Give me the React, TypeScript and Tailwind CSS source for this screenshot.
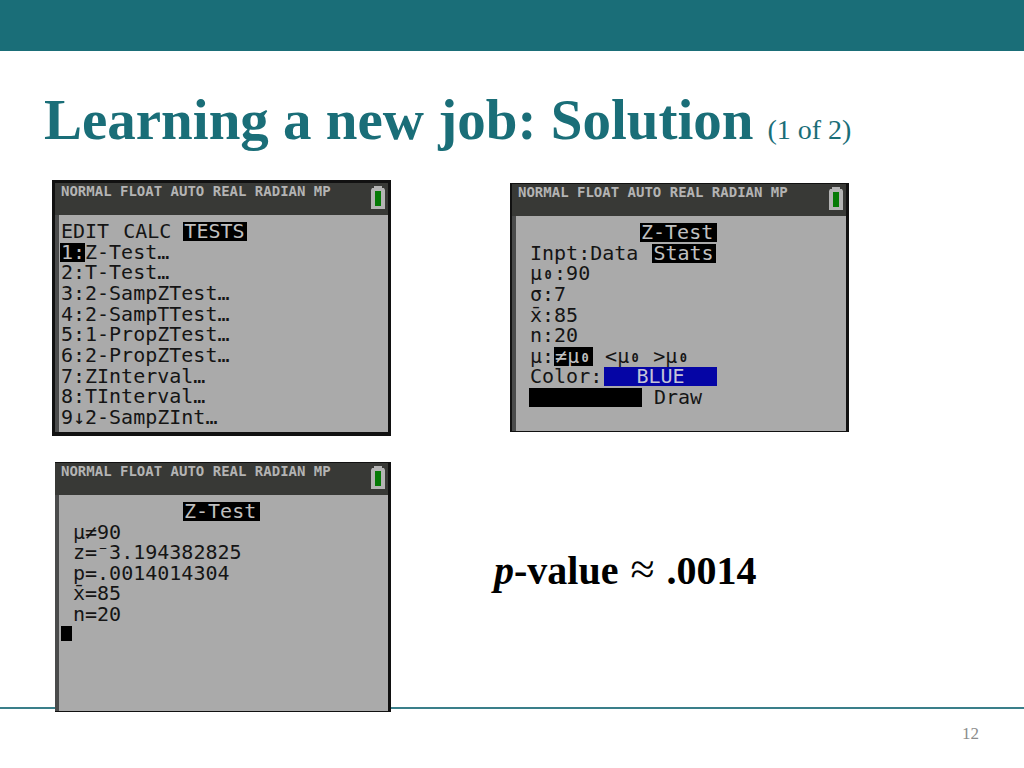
import type { ReactNode } from "react";
import clsx from "clsx";

const TESTS = [
  "T-Test…",
  "2-SampZTest…",
  "2-SampTTest…",
  "1-PropZTest…",
  "2-PropZTest…",
  "ZInterval…",
  "TInterval…",
];

export default function App() {
  return (
    <div className="flex min-h-screen flex-col bg-white font-['Liberation_Serif',serif]">
      <header className="h-[51px] bg-[#1a6e78]" />

      <main className="flex-1 pl-11 pr-8">
        <h1 className="flex items-baseline gap-3.5 pt-[37px] text-[57px] leading-[64px] font-bold text-[#1a6e78]">
          Learning a new job: Solution
          <small className="text-[28px] font-normal">(1 of 2)</small>
        </h1>

        <div className="mt-[18px] grid grid-cols-[458px_1fr] gap-y-[26px] pl-2">
          <Screen className="h-64 w-[339px] border-b-4 border-l-[3px] border-t-[3px]">
            <Rows className="h-[205px] pl-px">
              <Row>
                <span className="mr-3.5 pl-px">EDIT</span>
                <span className="mr-3">CALC</span>
                <Mark className="w-16">TESTS</Mark>
              </Row>
              <Row>
                <Mark className="w-[25px]">1:</Mark>Z-Test…
              </Row>
              {TESTS.map((name, i) => (
                <Row key={name}>
                  <span className="w-[25px] pl-px">{i + 2}:</span>
                  {name}
                </Row>
              ))}
              <Row>
                <span className="w-[25px] pl-px">9↓</span>2-SampZInt…
              </Row>
            </Rows>
          </Screen>

          <Screen className="mt-[3px] h-[249px] w-[339px] border-l-2 border-b border-t">
            <Rows className="h-[184px] pl-3.5">
              <Row>
                <Mark className="ml-[110px] w-[77px]">Z-Test</Mark>
              </Row>
              <Row>
                <span className="mr-3.5">Inpt:Data</span>
                <Mark className="w-16">Stats</Mark>
              </Row>
              <Row>
                <Mu0 />:90
              </Row>
              <Row>σ:7</Row>
              <Row>x̄:85</Row>
              <Row>n:20</Row>
              <Row>
                µ:
                <Mark className="mr-3 w-[39px]">
                  ≠<Mu0 />
                </Mark>
                <span className="mr-3 flex">
                  &lt;
                  <Mu0 />
                </span>
                &gt;
                <Mu0 />
              </Row>
              <Row>
                <span className="w-[74px]">Color:</span>
                <span className="w-[113px] bg-[#0505a5] text-center text-[#c4c4d8]">BLUE</span>
              </Row>
              <Row>
                <Mark className="-ml-px mr-3 w-[113px]" />
                Draw
              </Row>
            </Rows>
          </Screen>

          <Screen className="z-10 ml-[3px] h-[250px] w-[336px] border-b border-t">
            <Rows className="h-[122px] pl-3.5">
              <Row>
                <Mark className="ml-[110px] w-[77px]">Z-Test</Mark>
              </Row>
              <Row>µ≠90</Row>
              <Row>z=⁻3.194382825</Row>
              <Row>p=.0014014304</Row>
              <Row>x̄=85</Row>
              <Row>n=20</Row>
            </Rows>
            <div className="ml-0.5 mt-0.5 h-[15px] w-[11px] bg-black" />
          </Screen>

          <p className="-ml-4 mt-[85px] flex items-baseline gap-3 self-start text-[40px] leading-[46px] font-bold text-black">
            <span>
              <i>p</i>-value
            </span>
            <span className="text-[44px] font-normal">≈</span>
            <span>.0014</span>
          </p>
        </div>
      </main>

      <footer className="-mt-[5px] h-[61px] border-t-2 border-[#3a7f8a] pr-[45px] pt-[15px] text-right text-[17px] leading-5 text-[#8c8c8c]">
        12
      </footer>
    </div>
  );
}

// Calculator display: status bar on top, LCD area below
function Screen({ className, children }: { className: string; children: ReactNode }) {
  return (
    <section
      className={clsx(
        "relative flex flex-col border-r-[3px] border-[#111] bg-[#4a4b4b] pl-1 font-['DejaVu_Sans_Mono',monospace]",
        className,
      )}
    >
      <div className="-ml-1 flex h-8 shrink-0 items-start justify-between bg-[#383936] pl-1.5 pr-0.5 text-sm leading-4 font-bold text-[#b4b4b4]">
        <span>NORMAL FLOAT AUTO REAL RADIAN MP</span>
        <Battery />
      </div>
      <div className="flex-1 bg-[#aaa] pt-[7px] text-xl text-[#151515]">{children}</div>
    </section>
  );
}

function Rows({ className, children }: { className: string; children: ReactNode }) {
  return <div className={clsx("flex flex-col justify-between", className)}>{children}</div>;
}

function Row({ children }: { children: ReactNode }) {
  return <div className="flex h-[19px] leading-[19px] whitespace-pre">{children}</div>;
}

function Mark({ className, children }: { className: string; children?: ReactNode }) {
  return <span className={clsx("flex bg-black pl-px text-[#c0c0c0]", className)}>{children}</span>;
}

function Mu0() {
  return (
    <span className="flex">
      µ<span className="w-3 pt-0.5 text-center text-xs leading-[19px] font-bold">0</span>
    </span>
  );
}

function Battery() {
  return (
    <svg width="16" height="24" viewBox="0 0 16 24" className="mt-[3px]">
      <path d="M4 0h8v2h2l1 2v19H1V4l1-2h2z" fill="#b4b4b4" />
      <path d="M5 5h6v15H5z" fill="#067a06" />
    </svg>
  );
}
